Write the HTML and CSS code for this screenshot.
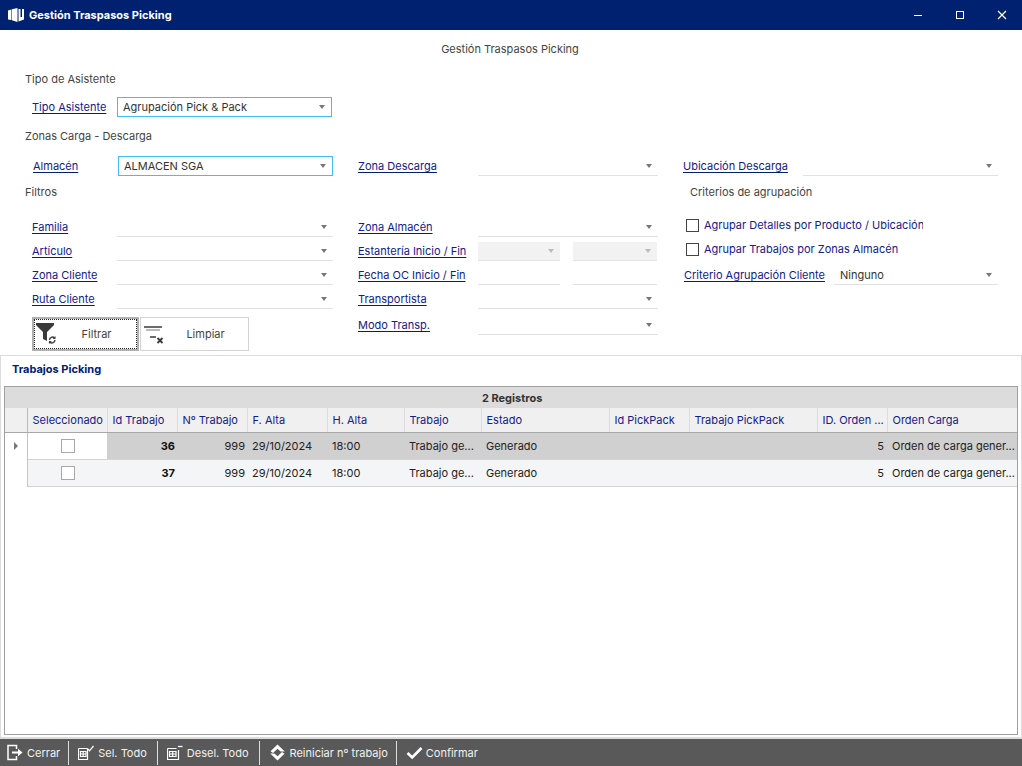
FILE: index.html
```html
<!DOCTYPE html>
<html lang="es">
<head>
<meta charset="utf-8">
<title>Gestión Traspasos Picking</title>
<link rel="stylesheet" href="styles.css">
</head>
<body>
<div class="window">
  <header class="titlebar">
    <svg class="app-icon" width="16" height="14" viewBox="0 0 16 14"><path d="M0 2.500L3.400 1.500V12L0 11.500Z" fill="#fff"/><path d="M3.900 1.300L9.500 0V14L3.900 12.200Z" fill="#fff"/><path d="M10.500 1H12.500V9H14V1H16V11.500L10.500 13.500Z" fill="#fff"/></svg>
    <span class="window-title">Gestión Traspasos Picking</span>
    <div class="controls">
      <svg width="14" height="14" viewBox="0 0 14 14"><path d="M3 7.500H11" stroke="#fff" stroke-width="1"/></svg>
      <svg width="14" height="14" viewBox="0 0 14 14"><rect x="3.500" y="3.500" width="7" height="7" fill="none" stroke="#fff"/></svg>
      <svg width="14" height="14" viewBox="0 0 14 14"><path d="M3 3L11 11M11 3L3 11" stroke="#fff" stroke-width="1.200"/></svg>
    </div>
  </header>

  <main class="form">
    <h1 class="form-title">Gestión Traspasos Picking</h1>
    <div class="group-title gt-tipo">Tipo de Asistente</div>
    <div class="field f-tipo">
      <label class="lbl">Tipo Asistente</label>
      <div class="combo focus w215">Agrupación Pick &amp; Pack<i class="arrow"></i></div>
    </div>
    <div class="group-title gt-zonas">Zonas Carga - Descarga</div>
    <div class="zone-row">
      <div class="field f-alm">
        <label class="lbl">Almacén</label>
        <div class="combo focus w215">ALMACEN SGA<i class="arrow"></i></div>
      </div>
      <div class="field col2">
        <label class="lbl">Zona Descarga</label>
        <div class="combo plain w180"><i class="arrow"></i></div>
      </div>
      <div class="field col3">
        <label class="lbl">Ubicación Descarga</label>
        <div class="combo plain w195"><i class="arrow"></i></div>
      </div>
    </div>
    <div class="head-row">
      <div class="group-title">Filtros</div>
      <div class="group-title gt-crit">Criterios de agrupación</div>
    </div>
    <div class="columns">
      <div class="column c1">
        <div class="field r"><label class="lbl">Familia</label><div class="combo plain w216"><i class="arrow"></i></div></div>
        <div class="field r"><label class="lbl">Artículo</label><div class="combo plain w216"><i class="arrow"></i></div></div>
        <div class="field r"><label class="lbl">Zona Cliente</label><div class="combo plain w216"><i class="arrow"></i></div></div>
        <div class="field r"><label class="lbl">Ruta Cliente</label><div class="combo plain w216"><i class="arrow"></i></div></div>
        <div class="buttons">
          <button class="btn active">
            <svg width="28" height="26" viewBox="0 0 28 26"><path d="M0 2H18V4L11 11V20L7 18V11L0 4Z" fill="#3a3a3a"/><path d="M13.500 19a3 3 0 0 1 5-2.200M18.900 19a3 3 0 0 1-5 2.200" fill="none" stroke="#3a3a3a" stroke-width="1.400"/><path d="M19.500 15v3h-3zM12.900 23v-3h3z" fill="#3a3a3a"/></svg>
            <span>Filtrar</span>
          </button>
          <button class="btn">
            <svg width="28" height="26" viewBox="0 0 28 26"><path d="M1 6H19" stroke="#3a3a3a" stroke-width="1.500"/><path d="M3 9H17" stroke="#777" stroke-width="1"/><path d="M7 16H13" stroke="#3a3a3a" stroke-width="1.500"/><path d="M14.500 17L19.500 22M19.500 17L14.500 22" stroke="#3a3a3a" stroke-width="1.800"/></svg>
            <span>Limpiar</span>
          </button>
        </div>
      </div>
      <div class="column c2">
        <div class="field r"><label class="lbl">Zona Almacén</label><div class="combo plain w180"><i class="arrow"></i></div></div>
        <div class="field r"><label class="lbl">Estantería Inicio / Fin</label><div class="pair">
          <div class="combo disabled w82"><i class="arrow"></i></div>
          <div class="combo disabled w84"><i class="arrow"></i></div>
        </div></div>
        <div class="field r"><label class="lbl">Fecha OC Inicio / Fin</label><div class="pair">
          <div class="combo plain w82"></div>
          <div class="combo plain w84"></div>
        </div></div>
        <div class="field r"><label class="lbl">Transportista</label><div class="combo plain w180"><i class="arrow"></i></div></div>
        <div class="field r r-modo"><label class="lbl">Modo Transp.</label><div class="combo plain w180"><i class="arrow"></i></div></div>
      </div>
      <div class="column c3">
        <div class="check"><i class="box"></i><span class="check-text">Agrupar Detalles por Producto / Ubicación</span></div>
        <div class="check"><i class="box"></i><span class="check-text">Agrupar Trabajos por Zonas Almacén</span></div>
        <div class="field r r-crit"><label class="lbl wide">Criterio Agrupación Cliente</label><div class="combo plain w164">Ninguno<i class="arrow"></i></div></div>
      </div>
    </div>
  </main>

  <section class="panel">
    <h2 class="panel-title">Trabajos Picking</h2>
    <div class="grid">
      <table>
        <colgroup>
          <col class="k0"><col class="k1"><col class="k2"><col class="k3"><col class="k4"><col class="k5"><col class="k6"><col class="k7"><col class="k8"><col class="k9"><col class="k10"><col class="k11">
        </colgroup>
        <thead>
          <tr class="group"><th colspan="12">2 Registros</th></tr>
          <tr class="cols">
            <th></th><th>Seleccionado</th><th>Id Trabajo</th><th>Nº Trabajo</th><th>F. Alta</th><th>H. Alta</th><th>Trabajo</th><th>Estado</th><th>Id PickPack</th><th>Trabajo PickPack</th><th>ID. Orden ...</th><th>Orden Carga</th>
          </tr>
        </thead>
        <tbody>
          <tr class="sel">
            <td class="ind"><i class="tri"></i></td><td class="chk"><i class="cbox"></i></td><td class="num b">36</td><td class="num">999</td><td>29/10/2024</td><td>18:00</td><td>Trabajo ge...</td><td>Generado</td><td></td><td></td><td class="num num-end">5</td><td>Orden de carga gener...</td>
          </tr>
          <tr class="alt">
            <td class="ind"></td><td class="chk"><i class="cbox"></i></td><td class="num b">37</td><td class="num">999</td><td>29/10/2024</td><td>18:00</td><td>Trabajo ge...</td><td>Generado</td><td></td><td></td><td class="num num-end">5</td><td>Orden de carga gener...</td>
          </tr>
        </tbody>
      </table>
    </div>
  </section>

  <footer class="toolbar">
    <button class="tool">
      <svg width="17" height="17" viewBox="0 0 17 17"><path d="M9.500 5V1.500H1V15.500H9.500V12" fill="none" stroke="#fff" stroke-width="1.500"/><path d="M5 7.500H11V4.800L15.500 8.500L11 12.200V9.500H5Z" fill="#fff"/></svg>
      <span>Cerrar</span>
    </button>
    <button class="tool">
      <svg width="17" height="17" viewBox="0 0 17 17"><path d="M0.500 4.500H9.500M0.500 4.500V15.500H9.500V4.500" fill="none" stroke="#fff" stroke-width="1.200"/><path d="M2.500 7.500H8M2.500 10H8M2.500 12.500H8M2.500 7V13M5.200 7V13M8 7V13" fill="none" stroke="#fff" stroke-width="1.200"/><path d="M10 5L11.500 6.800L15.500 2" fill="none" stroke="#fff" stroke-width="1.300"/></svg>
      <span>Sel. Todo</span>
    </button>
    <button class="tool tool-wide">
      <svg width="17" height="17" viewBox="0 0 17 17"><path d="M0.500 4.500H9.500M0.500 4.500V15.500H11.500V6" fill="none" stroke="#fff" stroke-width="1.200"/><path d="M2.500 7.500H9M2.500 10H9M2.500 12.500H9M2.500 7V13M5.700 7V13M9 7V13" fill="none" stroke="#fff" stroke-width="1.200"/><path d="M11 2.500H15.500" stroke="#fff" stroke-width="1.300"/></svg>
      <span>Desel. Todo</span>
    </button>
    <button class="tool tool-tight">
      <svg width="17" height="17" viewBox="0 0 17 17"><path d="M8.500 0.500L15.800 7.500H11.600L8.500 4.800L4 9L1.500 7.200Z" fill="#fff"/><path d="M8.500 16.500L1.200 9.500H5.400L8.500 12.200L13 8L15.500 9.800Z" fill="#fff"/></svg>
      <span>Reiniciar nº trabajo</span>
    </button>
    <button class="tool">
      <svg width="17" height="17" viewBox="0 0 17 17"><path d="M1.500 9L6.200 13.500L15.500 4" fill="none" stroke="#fff" stroke-width="2.600"/></svg>
      <span>Confirmar</span>
    </button>
  </footer>
</div>
</body>
</html>
```

FILE: styles.css
```css
* { box-sizing: border-box; }
html, body { margin: 0; padding: 0; }
body {
  width: 1022px;
  height: 766px;
  overflow: hidden;
  background: #fff;
  font-family: Inter, "Liberation Sans", sans-serif;
  font-size: 11px;
  color: #333;
}
.window { display: flex; flex-direction: column; width: 1022px; height: 766px; }

/* Title bar */
.titlebar {
  flex: none;
  height: 30px;
  background: #002070;
  color: #fff;
  display: flex;
  align-items: center;
  padding-left: 8px;
}
.app-icon { flex: none; margin-right: 5px; }
.window-title { font-weight: 700; font-size: 11px; }
.controls { margin-left: auto; display: flex; gap: 28px; padding-right: 13px; }

/* Form */
.form { flex: none; height: 325px; padding: 0 0 0 25px; }
.form-title {
  margin: 12px 0 0 -27px;
  height: 14px;
  line-height: 14px;
  text-align: center;
  font-weight: 400;
  font-size: 11px;
  color: #444;
}
.group-title { height: 14px; line-height: 14px; color: #444; }
.gt-tipo { margin-top: 16px; }
.f-tipo { margin: 11px 0 0 7px; height: 21px; }
.gt-zonas { margin-top: 11px; }
.zone-row { display: flex; margin-top: 13px; height: 21px; }
.field { display: flex; align-items: flex-start; }
.f-alm { margin-left: 8px; width: 325px; }
.col2 { width: 325px; }
.head-row { display: flex; margin-top: 8px; height: 14px; }
.head-row .group-title:first-child { width: 665px; }

.lbl {
  flex: none;
  height: 14px;
  line-height: 14px;
  margin-top: 3px;
  color: #12208a;
  text-decoration: underline;
  text-decoration-color: #002070;
  text-underline-offset: 2px;
}
.f-tipo .lbl, .f-alm .lbl, .c1 .lbl { width: 85px; }
.col2 .lbl, .col3 .lbl, .c2 .lbl { width: 120px; }

.combo {
  position: relative;
  flex: none;
  height: 20px;
  line-height: 18px;
  padding-left: 5px;
  color: #333;
}
.combo.focus { border: 1px solid #45bdf0; }
.combo.plain { border-bottom: 1px solid #e2e2e2; padding-left: 6px; }
.combo.disabled { background: #f2f2f2; border-bottom: 1px solid #e2e2e2; }
.w215 { width: 215px; }
.w216 { width: 216px; }
.w180 { width: 180px; }
.w195 { width: 195px; }
.w164 { width: 164px; }
.w82 { width: 82px; }
.w84 { width: 84px; }
.arrow {
  position: absolute;
  right: 6px;
  top: 8px;
  width: 0;
  height: 0;
  border-left: 3.500px solid transparent;
  border-right: 3.500px solid transparent;
  border-top: 4px solid #777;
}
.focus .arrow { top: 7px; }
.disabled .arrow { border-top-color: #bbb; }
.pair { display: flex; gap: 13px; align-self: flex-end; height: 24px; align-items: flex-end; }

.columns { display: flex; margin-top: 14px; }
.column { flex: none; }
.c1 { width: 333px; padding-left: 7px; }
.c2 { width: 325px; }
.c3 { width: 340px; padding-left: 3px; }

.r { height: 24px; align-items: flex-end; }
.r .lbl { margin: 0 0 3px; }
.r .lbl.wide { width: 150px; margin-left: -2px; }
.r .combo { height: 24px; line-height: 28px; }
.r .combo.disabled { height: 19px; align-self: flex-end; }
.r .arrow { top: auto; bottom: 7px; }
.r.r-modo, .r.r-modo .combo { height: 26px; }

.check { height: 24px; display: flex; align-items: center; color: #12208a; }
.box {
  flex: none;
  width: 13px;
  height: 13px;
  border: 1px solid #444;
  margin-right: 5px;
}
.check-text { width: 219px; white-space: nowrap; overflow: hidden; }

.buttons { display: flex; margin-top: 8px; gap: 1px; }
.btn {
  flex: none;
  width: 109px;
  height: 34px;
  background: #fff;
  border: 1px solid #d4d4d4;
  display: flex;
  align-items: center;
  padding: 0 0 0 2px;
  font: inherit;
  color: #444;
}
.btn span { flex: 1; text-align: center; padding-right: 8px; }
.btn.active { width: 107px; border: 2px solid #b0b0b0; outline: 1px dotted #222; outline-offset: -3px; }

/* Panel */
.panel {
  flex: 1;
  min-height: 0;
  border: 1px solid #dcdcdc;
  border-bottom-width: 2px;
  padding: 0 3px 2px 3px;
  display: flex;
  flex-direction: column;
}
.panel-title {
  margin: 0 0 0 8px;
  height: 30px;
  line-height: 27px;
  font-size: 11px;
  font-weight: 700;
  color: #002070;
}
.grid { flex: 1; border: 1px solid #a0a0a0; min-height: 0; }
table { border-collapse: collapse; table-layout: fixed; width: 1012px; }
.k0 { width: 22px; }
.k1 { width: 80px; }
.k2 { width: 70px; }
.k3 { width: 70px; }
.k4 { width: 80px; }
.k5 { width: 77px; }
.k6 { width: 77px; }
.k7 { width: 128px; }
.k8 { width: 80px; }
.k9 { width: 128px; }
.k10 { width: 70px; }
.k11 { width: 130px; }
th, td { padding: 0 3px 0 5px; white-space: nowrap; overflow: hidden; font-weight: 400; }
.group th { height: 21px; background: #dcdcdc; font-weight: 700; color: #333; text-align: center; }
.cols th {
  height: 24px;
  background: #f0f0f0;
  color: #12208a;
  text-align: left;
  border-right: 1px solid #dcdcdc;
  border-bottom: 1px solid #a8a8a8;
}
.cols th:first-child { border-right-color: #b8b8b8; }
.cols th:last-child { border-right: 0; }
td { height: 27px; border-bottom: 1px solid #d4d4d4; color: #222; }
.sel td { background: #d0d0d0; }
.alt td { background: #f4f5f7; }
td.num { text-align: right; padding-left: 0; padding-right: 2px; }
td.num-end { padding-right: 3px; }
.b { font-weight: 700; color: #111; }
tr td.ind { background: #fff; border-bottom: 0; border-right: 1px solid #c4c4c4; padding: 0 0 0 9px; }
tr.sel td.chk { background: #fff; }
td.chk { text-align: center; }
.cbox { display: inline-block; width: 14px; height: 14px; border: 1px solid #a8a8a8; background: #fff; vertical-align: middle; }
.tri {
  display: block;
  width: 0;
  height: 0;
  border-top: 4px solid transparent;
  border-bottom: 4px solid transparent;
  border-left: 4px solid #777;
}

/* Toolbar */
.toolbar {
  flex: none;
  height: 27px;
  background: #595959;
  display: flex;
  align-items: center;
  padding-left: 7px;
}
.tool {
  height: 24px;
  display: flex;
  align-items: center;
  gap: 3px;
  padding: 0 10px 0 0;
  margin-right: 9px;
  background: transparent;
  border: 0;
  border-right: 1px solid #ddd;
  font: inherit;
  color: #f2f2f2;
}
.tool:first-child { padding-right: 8px; }
.tool-wide { padding-right: 11px; }
.tool-tight { padding-right: 8px; }
.tool:last-child { border-right: 0; }
```
